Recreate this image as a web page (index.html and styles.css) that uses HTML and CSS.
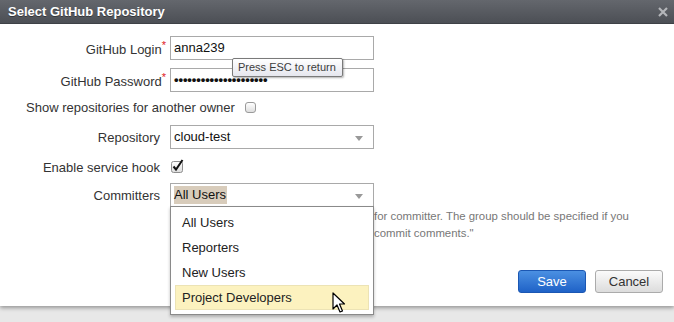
FILE: index.html
```html
<!DOCTYPE html>
<html lang="en">
<head>
  <meta charset="UTF-8">
  <title>Select GitHub Repository</title>
  <link rel="stylesheet" href="styles.css">
</head>
<body>
  <div class="dialog">
    <div class="titlebar">
      <span class="title">Select GitHub Repository</span>
      <svg class="close" width="10" height="10" viewBox="0 0 10 10">
        <path d="M1 1 L9 9 M9 1 L1 9" stroke="#b4b6ba" stroke-width="2.2"/>
      </svg>
    </div>

    <div class="form">
      <div class="row row-login">
        <label class="label">GitHub Login<span class="req">*</span></label>
        <div class="field">
          <div class="input">anna239</div>
          <div class="tooltip">Press ESC to return</div>
        </div>
      </div>

      <div class="row row-password">
        <label class="label">GitHub Password<span class="req">*</span></label>
        <div class="field">
          <div class="input dots">&bull;&bull;&bull;&bull;&bull;&bull;&bull;&bull;&bull;&bull;&bull;&bull;&bull;&bull;&bull;&bull;&bull;&bull;&bull;&bull;&bull;</div>
        </div>
      </div>

      <div class="row row-owner">
        <span class="owner-label">Show repositories for another owner</span>
        <span class="checkbox"></span>
      </div>

      <div class="row row-repo">
        <label class="label">Repository</label>
        <div class="field">
          <div class="select">cloud-test<span class="arrow"></span></div>
        </div>
      </div>

      <div class="row row-hook">
        <label class="label">Enable service hook</label>
        <div class="field">
          <svg class="checked" width="14" height="14" viewBox="0 0 14 14">
            <defs>
              <linearGradient id="cbg" x1="0" y1="0" x2="0" y2="1">
                <stop offset="0" stop-color="#ffffff"/>
                <stop offset="1" stop-color="#dcdcdc"/>
              </linearGradient>
            </defs>
            <rect x="0.5" y="2.5" width="11" height="11" rx="2" fill="url(#cbg)" stroke="#8e8e8e"/>
            <path d="M2.5 7.5 L5 10.5 L11.5 1" fill="none" stroke="#111" stroke-width="2"/>
          </svg>
        </div>
      </div>

      <div class="row row-committers">
        <label class="label">Committers</label>
        <div class="field">
          <div class="select"><span class="selected-text">All Users</span><span class="arrow"></span></div>
          <ul class="dropdown">
            <li>All Users</li>
            <li>Reporters</li>
            <li>New Users</li>
            <li class="active">Project Developers</li>
          </ul>
        </div>
      </div>

      <p class="hint">for committer. The group should be specified if you<br>commit comments."</p>
    </div>

    <div class="actions">
      <button class="btn btn-primary">Save</button>
      <button class="btn">Cancel</button>
    </div>

    <svg class="cursor" width="14" height="22" viewBox="0 0 14 22">
      <path d="M1 1 L1 17 L5 13 L8 20 L10.5 19 L7.5 12 L12.5 12 Z" fill="#fff" stroke="#000" stroke-width="1.2" stroke-linejoin="round"/>
    </svg>
  </div>
</body>
</html>
```

FILE: styles.css
```css
* {
  box-sizing: border-box;
  margin: 0;
  padding: 0;
}

body {
  background-color: #e8e8e8;
  font-family: 'Liberation Sans', Arial, sans-serif;
  font-size: 13px;
  color: #333;
  width: 674px;
  height: 322px;
  overflow: hidden;
}

.dialog {
  position: relative;
  background-color: white;
  height: 306px;
  box-shadow: 0 2px 4px rgba(0, 0, 0, 0.35);
}

.titlebar {
  height: 24px;
  display: flex;
  align-items: center;
  justify-content: space-between;
  padding: 0 6px 0 8px;
  background: linear-gradient(#64676d, #4c4f55);
  border-bottom: 1px solid #3e4146;
}

.title {
  color: white;
  font-weight: bold;
  font-size: 13px;
  text-shadow: 0 1px 0 rgba(0, 0, 0, 0.4);
}

.close {
  display: block;
}

.form {
  padding-top: 12px;
}

.row {
  display: flex;
  align-items: center;
}

.label {
  width: 160px;
  text-align: right;
  margin-right: 10px;
  white-space: nowrap;
}

.req {
  color: #e0201c;
  font-size: 11px;
  vertical-align: 5px;
  margin-right: -6px;
}

.field {
  position: relative;
  width: 204px;
}

.row-login {
  height: 24px;
  margin-bottom: 8px;
}

.row-password {
  height: 24px;
  margin-bottom: 4px;
}

.row-owner {
  height: 22px;
  margin-bottom: 7px;
  padding-left: 26px;
}

.row-repo {
  height: 24px;
  margin-bottom: 6px;
}

.row-hook {
  height: 24px;
  margin-bottom: 4px;
}

.row-committers {
  height: 24px;
}

.input,
.select {
  position: relative;
  height: 24px;
  border: 1px solid #a9a9a9;
  padding: 0 3px;
  line-height: 22px;
  color: #111;
  background-color: white;
}

.dots {
  font-size: 13px;
  letter-spacing: -0.1px;
  font-weight: bold;
}

.tooltip {
  position: absolute;
  left: 62px;
  top: 22px;
  width: 111px;
  height: 19px;
  line-height: 17px;
  padding-left: 5px;
  font-size: 11px;
  color: #3c3c3c;
  background: linear-gradient(#ffffff, #e5e6ee);
  border: 1px solid #7a7a7a;
  border-radius: 2px;
  box-shadow: 1px 1px 2px rgba(0, 0, 0, 0.3);
  white-space: nowrap;
  z-index: 2;
}

.owner-label {
  margin-right: 10px;
}

.checkbox {
  display: inline-block;
  width: 11px;
  height: 11px;
  border: 1px solid #9a9a9a;
  border-radius: 3px;
  background: linear-gradient(#ffffff, #dedede);
}

.checked {
  display: block;
  margin-left: 1px;
  margin-top: -3px;
}

.arrow {
  position: absolute;
  right: 10px;
  top: 10px;
  width: 0;
  height: 0;
  border-left: 4px solid transparent;
  border-right: 4px solid transparent;
  border-top: 5px solid #999;
}

.selected-text {
  background-color: #d8ccbb;
  padding: 1px 1px 2px 0;
}

.dropdown {
  position: absolute;
  left: 0;
  top: 23px;
  width: 204px;
  list-style: none;
  background-color: white;
  border: 1px solid #8a8a8a;
  box-shadow: 0 2px 3px rgba(0, 0, 0, 0.25);
  padding: 3px 4px 4px;
  z-index: 3;
}

.dropdown li {
  height: 25px;
  line-height: 25px;
  padding-left: 7px;
  color: #222;
  font-size: 13px;
}

.dropdown li.active {
  background-color: #fcf2bf;
  border: 1px solid #ece3b5;
  line-height: 23px;
  padding-left: 6px;
}

.hint {
  padding-left: 374px;
  margin-top: 1px;
  font-size: 11.4px;
  line-height: 17px;
  color: #777;
}

.actions {
  display: flex;
  justify-content: flex-end;
  gap: 9px;
  padding-right: 11px;
  margin-top: 28px;
}

.btn {
  width: 68px;
  height: 23px;
  font-family: 'Liberation Sans', Arial, sans-serif;
  font-size: 13px;
  color: #333;
  background: linear-gradient(#fbfbfb, #dcdcdc);
  border: 1px solid #ababab;
  border-radius: 3px;
  cursor: pointer;
}

.btn-primary {
  color: white;
  background: linear-gradient(#4b90e2, #1f62c7);
  border-color: #1b57b3;
}

.cursor {
  position: absolute;
  left: 332px;
  top: 292px;
  z-index: 5;
}
```
